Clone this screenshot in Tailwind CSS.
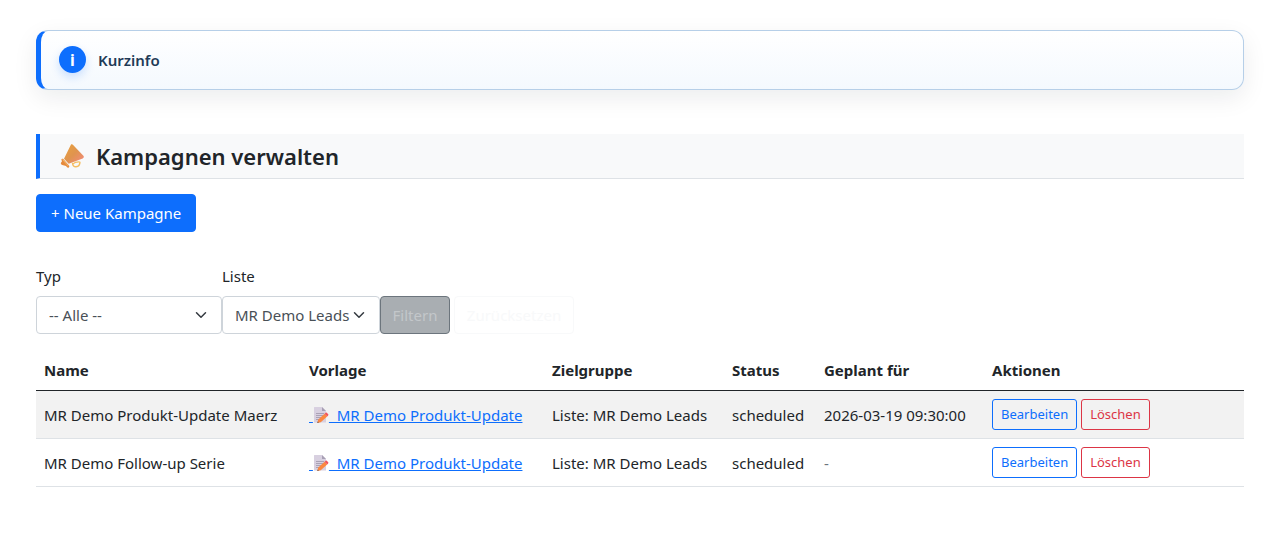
<!DOCTYPE html>
<html lang="de">
<head>
  <meta charset="UTF-8">
  <meta name="viewport" content="width=device-width, initial-scale=1.0">
  <title>Kampagnen verwalten</title>
  <script src="https://cdn.jsdelivr.net/npm/@tailwindcss/browser@4"></script>
</head>
<body class="bg-white px-9 pt-[30px] pb-12 font-['Noto_Sans','Open_Sans',sans-serif] text-[15px] leading-6 text-[#212529]">
  <!-- Icons -->
  <svg class="hidden">
    <defs>
      <symbol id="memo" viewBox="0 0 16 16">
        <path d="M1.500 0H9l4 4v11.500H1.500A.5.5 0 0 1 1 15V.5A.5.5 0 0 1 1.500 0z" fill="#d8d0e0"/>
        <path d="M9 0v3.500a.5.5 0 0 0 .5.500H13z" fill="#a79fb4"/>
        <path d="M3 6.500h8M3 8.500h7M3 10.500h5M3 12.500h3" stroke="#aaa2b5" stroke-width="1"/>
        <path d="M11.500 6.800l2.700 2.700-6.500 5.800-3.400.7.800-3.300z" fill="#fb8840"/>
        <path d="M11.500 6.800l1-.9c.4-.4 1-.4 1.400 0l1.200 1.200c.4.400.4 1 0 1.400l-.9 1z" fill="#f2545b"/>
        <path d="M4.300 16l.4-1.600 1.200 1.200z" fill="#5a4a4a"/>
      </symbol>
      <symbol id="chevron" viewBox="0 0 16 16">
        <path d="m2 5 6 6 6-6" fill="none" stroke="#343a40" stroke-width="2" stroke-linecap="round" stroke-linejoin="round"/>
      </symbol>
    </defs>
  </svg>

  <div class="flex items-center gap-3 rounded-xl border border-l-[5px] border-[#b6cfe8] border-l-[#0d6efd] bg-linear-to-b from-white to-[#f4f9fe] py-[15px] pl-[18px] pr-4 shadow-[0_8px_24px_rgba(15,23,42,0.08)]">
    <span class="mb-px flex size-[27px] items-center justify-center rounded-full bg-[#0d6efd] text-base font-bold leading-none text-white shadow-[0_4px_10px_rgba(13,110,253,0.2)]">i</span>
    <strong class="text-[15px] font-semibold text-[#1f3b57]">Kurzinfo</strong>
  </div>

  <h1 class="mt-11 flex items-center gap-3 border-b border-l-4 border-b-[#dee2e6] border-l-[#0d6efd] bg-[#f8f9fa] py-2 pl-5 text-[22px] font-semibold leading-7">
    <svg class="size-6" viewBox="0 0 24 24" aria-hidden="true">
      <defs>
        <linearGradient id="horn" x1="0" y1="0" x2="1" y2="1">
          <stop offset="0" stop-color="#e9a23c"/>
          <stop offset="0.5" stop-color="#e0944f"/>
          <stop offset="1" stop-color="#f58a80"/>
        </linearGradient>
      </defs>
      <path d="M12.600 19.500c.2 2.200 1.400 3.500 3.400 3.300 2.200-.3 3.900-2 3.900-4.600" fill="none" stroke="#f5bd60" stroke-width="1.500" stroke-linecap="round"/>
      <path d="M13 19.800c1.500-1.600 3.800-2 6.500-1.900" fill="none" stroke="#f5bd60" stroke-width="1.200"/>
      <path d="M11 .6c.7-.5 1.600-.3 2.100.4l10.300 10.800c.8.900.4 2.200-.7 2.600L8.700 19.800 4 14.800z" fill="url(#horn)"/>
      <path d="M1.600 15.200c.6-.5 1.400-.5 1.900.1l5.500 6.300c.5.600.4 1.300-.2 1.800-.6.500-1.300.3-1.800-.2l-1-1.200-3.700-.9c-1.400-.4-1.900-1.700-1-2.800l.8-1.300c-.6-.7-1.100-1.300-.5-1.800z" fill="#e58a3c"/>
      <path d="M2.800 15.800l5.300 6" stroke="#f7b765" stroke-width="1" stroke-linecap="round"/>
    </svg>
    Kampagnen verwalten
  </h1>

  <a href="#" class="mt-[15px] inline-block rounded border border-[#0d6efd] bg-[#0d6efd] px-[14px] py-[6px] text-white">+ Neue Kampagne</a>

  <form class="mt-8 flex items-end">
    <div class="w-[186px]">
      <label for="typ" class="mb-2 block">Typ</label>
      <div class="relative">
        <select id="typ" class="h-[38px] w-full appearance-none rounded border border-[#ced4da] bg-white px-3 text-[#495057]">
          <option>-- Alle --</option>
        </select>
        <svg class="pointer-events-none absolute right-[15px] top-[13px] size-3"><use href="#chevron"/></svg>
      </div>
    </div>
    <div class="w-[158px]">
      <label for="liste" class="mb-2 block">Liste</label>
      <div class="relative">
        <select id="liste" class="h-[38px] w-full appearance-none rounded border border-[#ced4da] bg-white px-3 text-[#495057]">
          <option>MR Demo Leads</option>
        </select>
        <svg class="pointer-events-none absolute right-[15px] top-[13px] size-3"><use href="#chevron"/></svg>
      </div>
    </div>
    <button type="button" class="mr-1 h-[38px] w-[70px] rounded border border-[#6c757d] bg-[#a9aeb2] text-[#c3c7ca]">Filtern</button>
    <button type="button" class="h-[38px] w-[120px] rounded border border-[#f8f9fa] text-[#f8f9fa]">Zurücksetzen</button>
  </form>

  <table class="mt-4 w-full table-fixed text-left">
    <colgroup>
      <col class="w-[265px]">
      <col class="w-[243px]">
      <col class="w-[180px]">
      <col class="w-[92px]">
      <col class="w-[168px]">
      <col>
    </colgroup>
    <thead>
      <tr class="border-b border-[#212529]">
        <th class="p-2 font-bold">Name</th>
        <th class="p-2 font-bold">Vorlage</th>
        <th class="p-2 font-bold">Zielgruppe</th>
        <th class="p-2 font-bold">Status</th>
        <th class="p-2 font-bold">Geplant für</th>
        <th class="p-2 font-bold">Aktionen</th>
      </tr>
    </thead>
    <tbody class="whitespace-nowrap">
      <tr class="border-b border-[#dee2e6] bg-[#f2f2f2]">
        <td class="px-2">MR Demo Produkt-Update Maerz</td>
        <td class="px-2"><a href="#" class="text-[#0d6efd] underline">&nbsp;<svg class="inline size-4 align-[-2px]" aria-hidden="true"><use href="#memo"/></svg>&nbsp; MR Demo Produkt-Update</a></td>
        <td class="px-2">Liste: MR Demo Leads</td>
        <td class="px-2">scheduled</td>
        <td class="px-2">2026-03-19 09:30:00</td>
        <td class="px-2 py-2">
          <div class="flex gap-1 text-[13px] leading-[21px]">
            <a href="#" class="rounded-[3px] border border-[#0d6efd] px-2 py-1 text-[#0d6efd]">Bearbeiten</a>
            <button type="button" class="rounded-[3px] border border-[#dc3545] px-2 py-1 text-[#dc3545]">Löschen</button>
          </div>
        </td>
      </tr>
      <tr class="border-b border-[#dee2e6]">
        <td class="px-2">MR Demo Follow-up Serie</td>
        <td class="px-2"><a href="#" class="text-[#0d6efd] underline">&nbsp;<svg class="inline size-4 align-[-2px]" aria-hidden="true"><use href="#memo"/></svg>&nbsp; MR Demo Produkt-Update</a></td>
        <td class="px-2">Liste: MR Demo Leads</td>
        <td class="px-2">scheduled</td>
        <td class="px-2 text-[#6c757d]">-</td>
        <td class="px-2 py-2">
          <div class="flex gap-1 text-[13px] leading-[21px]">
            <a href="#" class="rounded-[3px] border border-[#0d6efd] px-2 py-1 text-[#0d6efd]">Bearbeiten</a>
            <button type="button" class="rounded-[3px] border border-[#dc3545] px-2 py-1 text-[#dc3545]">Löschen</button>
          </div>
        </td>
      </tr>
    </tbody>
  </table>
</body>
</html>
